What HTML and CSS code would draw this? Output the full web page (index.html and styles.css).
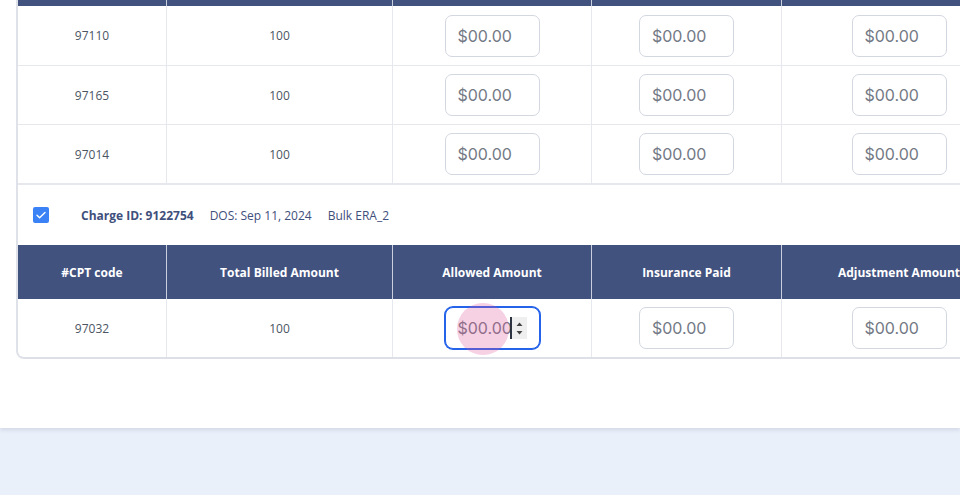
FILE: index.html
```html
<!DOCTYPE html>
<html>
<head>
<meta charset="utf-8">
<link rel="stylesheet" href="styles.css">
</head>
<body>
<div class="card">
  <div class="wrap">
    <div class="row head strip">
      <div class="cell"></div><div class="cell"></div><div class="cell"></div><div class="cell"></div><div class="cell"></div>
    </div>
    <div class="row data first">
      <div class="cell">97110</div>
      <div class="cell">100</div>
      <div class="cell"><input class="amt" placeholder="$00.00"></div>
      <div class="cell"><input class="amt" placeholder="$00.00"></div>
      <div class="cell"><input class="amt" placeholder="$00.00"></div>
    </div>
    <div class="row data">
      <div class="cell">97165</div>
      <div class="cell">100</div>
      <div class="cell"><input class="amt" placeholder="$00.00"></div>
      <div class="cell"><input class="amt" placeholder="$00.00"></div>
      <div class="cell"><input class="amt" placeholder="$00.00"></div>
    </div>
    <div class="row data last">
      <div class="cell">97014</div>
      <div class="cell">100</div>
      <div class="cell"><input class="amt" placeholder="$00.00"></div>
      <div class="cell"><input class="amt" placeholder="$00.00"></div>
      <div class="cell"><input class="amt" placeholder="$00.00"></div>
    </div>
    <div class="charge">
      <span class="check"><svg width="16" height="16" viewBox="0 0 16 16"><path d="M4 8.2l2.6 2.6L12 5.4" fill="none" stroke="#fff" stroke-width="1.4" stroke-linecap="round" stroke-linejoin="round"/></svg></span>
      <span class="cid">Charge ID: 9122754</span>
      <span class="meta">DOS: Sep 11, 2024</span>
      <span class="meta">Bulk ERA_2</span>
    </div>
    <div class="row head big">
      <div class="cell">#CPT code</div>
      <div class="cell">Total Billed Amount</div>
      <div class="cell">Allowed Amount</div>
      <div class="cell">Insurance Paid</div>
      <div class="cell">Adjustment Amount</div>
    </div>
    <div class="row data end">
      <div class="cell">97032</div>
      <div class="cell">100</div>
      <div class="cell">
        <div class="focus-box">
          <input class="amt focused" placeholder="$00.00">
          <span class="caret"></span>
          <span class="spin"><svg width="15" height="22" viewBox="0 0 15 22"><path d="M4.5 9L7.5 5.5L10.5 9Z" fill="#444"/><path d="M4.5 14L7.5 17.5L10.5 14Z" fill="#444"/></svg></span>
          <span class="click"></span>
        </div>
      </div>
      <div class="cell"><input class="amt" placeholder="$00.00"></div>
      <div class="cell"><input class="amt" placeholder="$00.00"></div>
    </div>
  </div>
</div>
</body>
</html>
```

FILE: styles.css
```css
* { box-sizing: border-box; }
html, body { margin: 0; padding: 0; }
body {
  background: #eaf0fa;
  font-family: "Open Sans", "Noto Sans", sans-serif;
  width: 960px;
  height: 495px;
  overflow: hidden;
}
.card {
  background: #fff;
  height: 428px;
  padding-left: 16px;
  box-shadow: 0 2px 4px rgba(30, 40, 70, 0.12);
  overflow: hidden;
}
.wrap {
  width: 1100px;
  border-left: 2px solid #dfe2e8;
  border-bottom: 2px solid #dde1e7;
  border-radius: 0 0 0 8px;
}
.row {
  display: grid;
  grid-template-columns: 149px 226px 199px 190px 235px;
}
.cell {
  border-right: 1px solid #e6e8ee;
  display: flex;
  align-items: center;
  justify-content: center;
}
.head { background: #41527f; }
.head .cell { border-right-color: #c9cfdd; }
.strip { height: 6px; }
.big {
  height: 54px;
  color: #fff;
  font-size: 12px;
  font-weight: 700;
}
.data {
  height: 59px;
  border-bottom: 1px solid #e6e8ee;
  font-size: 12px;
  color: #4b5563;
}
.data.first { height: 60px; }
.data.last { height: 60px; border-bottom: 2px solid #e6e8ee; }
.data.end { border-bottom: none; height: 58px; }
.amt {
  width: 95px;
  height: 42px;
  border: 1px solid #d3d7e0;
  border-radius: 7px;
  padding: 0 0 0 12px;
  font-family: "Inter", "Liberation Sans", sans-serif;
  font-size: 16px;
  color: #374151;
  background: #fff;
  outline: none;
}
.amt::placeholder { color: #737985; }
.focus-box { position: relative; width: 95px; height: 42px; }
.amt.focused {
  border-color: #2563eb;
  box-shadow: 0 0 0 1px #2563eb;
  border-radius: 8px;
}
.caret {
  position: absolute;
  left: 65px;
  top: 10px;
  width: 2px;
  height: 22px;
  background: #2d3340;
}
.spin {
  position: absolute;
  left: 67px;
  top: 10px;
  width: 15px;
  height: 22px;
  background: #efefef;
  display: block;
}
.spin svg { display: block; }
.click {
  position: absolute;
  left: 12px;
  top: -4px;
  width: 52px;
  height: 52px;
  border-radius: 50%;
  background: rgba(222, 80, 150, 0.27);
  pointer-events: none;
}
.charge {
  height: 60px;
  display: flex;
  align-items: center;
  padding-left: 15px;
  font-size: 12px;
  color: #3f4f7c;
}
.check {
  width: 16px;
  height: 16px;
  background: #3b82f6;
  border-radius: 2px;
  margin-right: 32px;
  display: block;
}
.check svg { display: block; }
.cid { font-weight: 700; margin-right: 16px; }
.meta { margin-right: 16px; }
```
